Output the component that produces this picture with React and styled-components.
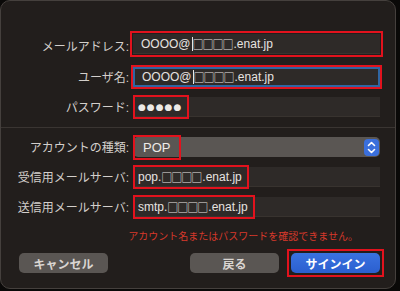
import React from "react";
import { styled, css, createGlobalStyle } from "styled-components";

const Global = createGlobalStyle`
  html, body {
    margin: 0;
    padding: 0;
    background: #0a0908;
  }
  body {
    font-family: "Liberation Sans", "Noto Sans CJK JP", sans-serif;
  }
`;

const Window = styled.div`
  box-sizing: border-box;
  width: 396px;
  height: 289px;
  background: #221e1c;
  border: 1px solid #45403d;
  border-radius: 10px;
  padding: 33px 15px 0 0;
  display: flex;
  flex-direction: column;
`;

const Grid = styled.div`
  display: grid;
  grid-template-columns: 128px 1fr;
  column-gap: 4px;
  row-gap: 10px;
  align-items: center;
`;

const Label = styled.div`
  text-align: right;
  font-size: 12px;
  line-height: 14px;
  color: #d3cfcb;
  padding-top: 2px;
`;

const Field = styled.div`
  box-sizing: border-box;
  height: 20px;
  background: #2e2a28;
  border-bottom: 1px solid #38332f;
  display: flex;
  align-items: center;
  padding-left: 8px;
  font-size: 12px;
  color: #e6e3e0;
  white-space: nowrap;
  ${(p) =>
    p.$focused &&
    css`
      border: 2px solid #2f66a3;
      padding-left: 7px;
    `}
  ${(p) =>
    p.$marked &&
    css`
      outline: 2px solid #e2121d;
      outline-offset: ${p.$focused ? "0px" : "1px"};
    `}
`;

const FirstField = styled(Field)`
  margin-bottom: 3px;
`;

const Mark = styled.span`
  box-sizing: border-box;
  display: inline-flex;
  align-items: center;
  height: 24px;
  margin-left: -8px;
  padding: 0 5px 0 3px;
  border: 2px solid #e2121d;
  flex-shrink: 0;
`;

const Squares = styled.span`
  font-family: "Noto Sans CJK JP", sans-serif;
  font-size: 11px;
  letter-spacing: -1px;
  margin-right: 1px;
`;

const Dots = styled.span`
  font-family: "DejaVu Sans", sans-serif;
  font-size: 9px;
  letter-spacing: 1px;
  color: #ece9e6;
`;

const Caret = styled.span`
  display: inline-block;
  width: 1px;
  height: 14px;
  background: #e9e6e3;
  margin: 0 0 0 1px;
`;

const Separator = styled.div`
  height: 1px;
  background: #3a3532;
  margin: 10px -15px 9px 0;
`;

const Popup = styled.div`
  box-sizing: border-box;
  height: 20px;
  background: #5a5653;
  border-radius: 5px;
  display: flex;
  align-items: center;
  justify-content: space-between;
  font-size: 13px;
  color: #eeebe8;
`;

const PopupMark = styled.span`
  box-sizing: border-box;
  display: inline-flex;
  align-items: center;
  height: 25px;
  width: 48px;
  padding-left: 8px;
  border: 2px solid #e2121d;
`;

const Stepper = styled.span`
  width: 15px;
  height: 17px;
  margin-right: 1px;
  border-radius: 4px;
  background: #3a6fdc;
  display: flex;
  align-items: center;
  justify-content: center;
`;

const ErrorText = styled.div`
  margin-top: 14px;
  padding-right: 22px;
  text-align: right;
  font-size: 10px;
  line-height: 12px;
  color: #d7392b;
`;

const Buttons = styled.div`
  display: flex;
  align-items: center;
  margin-top: 6px;
  padding-left: 18px;
`;

const Button = styled.button`
  box-sizing: border-box;
  width: 89px;
  height: 20px;
  border: none;
  border-radius: 5px;
  font-family: inherit;
  font-size: 12px;
  font-weight: bold;
  padding: 0;
  color: ${(p) => (p.$primary ? "#ffffff" : "#d9d5d1")};
  background: ${(p) =>
    p.$primary ? "linear-gradient(#3a72e0, #2b5fcf)" : "#5a5653"};
`;

const MarkFrame = styled.div`
  box-sizing: border-box;
  padding: 2px;
  border: 2px solid #e2121d;
  display: flex;
  margin-right: -4px;
`;

const Spacer = styled.div`
  flex: 1;
`;

const ButtonGap = styled.div`
  width: 8px;
`;

const Chevrons = () => (
  <svg width="9" height="13" viewBox="0 0 9 13" fill="none" stroke="#fff" strokeWidth="1.6" strokeLinecap="round" strokeLinejoin="round">
    <path d="M1.5 4.5 L4.5 1.5 L7.5 4.5" />
    <path d="M1.5 8.5 L4.5 11.5 L7.5 8.5" />
  </svg>
);

export default function App() {
  return (
    <>
      <Global />
      <Window>
        <Grid>
          <Label>メールアドレス:</Label>
          <FirstField $marked>
            OOOO@<Caret />
            <Squares>□□□□</Squares>.enat.jp
          </FirstField>
          <Label>ユーザ名:</Label>
          <Field $focused $marked>
            OOOO@<Caret />
            <Squares>□□□□</Squares>.enat.jp
          </Field>
          <Label>パスワード:</Label>
          <Field>
            <Mark>
              <Dots>●●●●●</Dots>
            </Mark>
          </Field>
        </Grid>
        <Separator />
        <Grid>
          <Label>アカウントの種類:</Label>
          <Popup>
            <PopupMark>POP</PopupMark>
            <Stepper>
              <Chevrons />
            </Stepper>
          </Popup>
          <Label>受信用メールサーバ:</Label>
          <Field>
            <Mark>
              pop.<Squares>□□□□</Squares>.enat.jp
            </Mark>
          </Field>
          <Label>送信用メールサーバ:</Label>
          <Field>
            <Mark>
              smtp.<Squares>□□□□</Squares>.enat.jp
            </Mark>
          </Field>
        </Grid>
        <ErrorText>アカウント名またはパスワードを確認できません。</ErrorText>
        <Buttons>
          <Button>キャンセル</Button>
          <Spacer />
          <Button>戻る</Button>
          <ButtonGap />
          <MarkFrame>
            <Button $primary>サインイン</Button>
          </MarkFrame>
        </Buttons>
      </Window>
    </>
  );
}
